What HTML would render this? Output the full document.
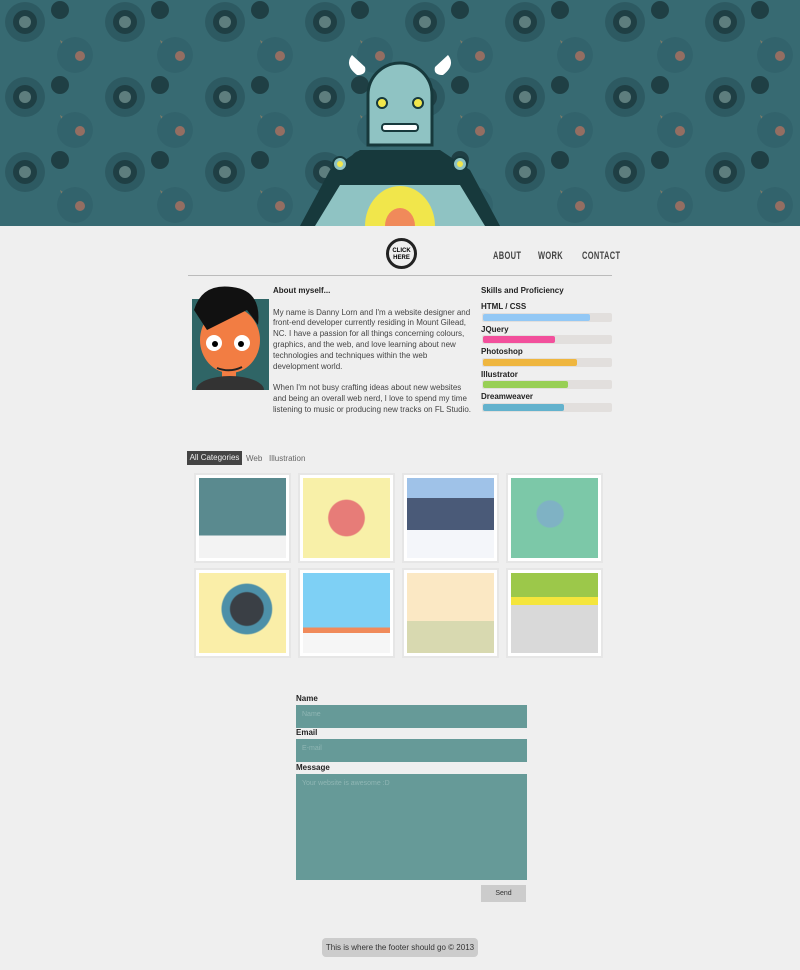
<!DOCTYPE html>
<html><head><style>
body{margin:0;width:800px;height:970px;background:#efefef;font-family:"Liberation Sans",sans-serif;position:relative;overflow:hidden;color:#333}
.a{position:absolute}
.nav{font-family:"Liberation Sans",sans-serif;font-size:11px;font-weight:bold;color:#444;letter-spacing:0.5px;transform:scaleX(0.68);transform-origin:left}
.sk{font-size:8px;font-weight:bold;color:#222}
.bar{height:9px;width:130px;background:#e2dfdd;border-radius:2px}
.bar div{height:7px;margin:1px;border-radius:2px}
.cell{width:93px;height:86px;background:#fff;border:2px solid #e6e6e6;padding:0}
.cell div{margin:3px;height:80px}
label{position:absolute;font-size:8px;font-weight:bold;color:#222}
.in{background:#669a98;font-size:7px;color:#8fb6b4;padding:6px 6px;box-sizing:border-box}
</style></head><body>
<svg class="a" style="left:0px;top:0px" width="800" height="226">
<defs><pattern id="p" width="100" height="75" patternUnits="userSpaceOnUse">
<rect width="100" height="75" fill="#376a72"/>
<path d="M60 40 L90 60 L70 70Z" fill="#7d7a68"/>
<circle cx="25" cy="22" r="20" fill="#2d5a62"/><circle cx="25" cy="22" r="12" fill="#1f3f44"/><circle cx="25" cy="22" r="6" fill="#5e7e7e"/>
<circle cx="75" cy="55" r="18" fill="#32636c"/><circle cx="80" cy="56" r="5" fill="#946e62"/>
<circle cx="60" cy="10" r="9" fill="#1f3f44"/></pattern></defs>
<rect width="800" height="226" fill="url(#p)"/>
<path d="M300 226 L330 170 L360 150 L440 150 L470 170 L500 226Z" fill="#17393c"/>
<path d="M315 226 L340 185 L460 185 L485 226Z" fill="#8fc3c3"/>
<path d="M365 226 A35 40 0 0 1 435 226Z" fill="#f1e64b"/><path d="M385 226 A15 18 0 0 1 415 226Z" fill="#f08a5a"/>
<circle cx="340" cy="164" r="7" fill="#8fc3c3" stroke="#17393c" stroke-width="2"/><circle cx="340" cy="164" r="3" fill="#f1e64b"/>
<circle cx="460" cy="164" r="7" fill="#8fc3c3" stroke="#17393c" stroke-width="2"/><circle cx="460" cy="164" r="3" fill="#f1e64b"/>
<path d="M368 145 L368 95 A32 32 0 0 1 432 95 L432 145Z" fill="#8fc3c3" stroke="#17393c" stroke-width="3"/>
<circle cx="382" cy="103" r="5" fill="#f1e64b" stroke="#17393c" stroke-width="2"/><circle cx="418" cy="103" r="5" fill="#f1e64b" stroke="#17393c" stroke-width="2"/>
<rect x="382" y="124" width="36" height="7" rx="3" fill="#fff" stroke="#17393c" stroke-width="2"/>
<path d="M352 55 q-8 10 5 20 q10 0 8 -8Z M448 55 q8 10 -5 20 q-10 0 -8 -8Z" fill="#fff"/>
</svg>
<svg class="a" style="left:385px;top:237px" width="33" height="33"><circle cx="16.5" cy="16.5" r="14" fill="none" stroke="#222" stroke-width="3"/><text x="16.5" y="15" font-size="6" font-weight="bold" text-anchor="middle" font-family="Liberation Sans">CLICK</text><text x="16.5" y="22" font-size="6" font-weight="bold" text-anchor="middle" font-family="Liberation Sans">HERE</text></svg>
<div class="a nav" style="left:493px;top:250px">ABOUT</div>
<div class="a nav" style="left:538px;top:250px">WORK</div>
<div class="a nav" style="left:582px;top:250px">CONTACT</div>
<div class="a" style="left:188px;top:275px;width:424px;height:1px;background:#bbb"></div>
<svg class="a" style="left:192px;top:285px" width="77" height="105"><rect y="14" width="77" height="91" fill="#2f6566"/><rect x="30" y="75" width="14" height="20" fill="#f27d43"/><ellipse cx="38" cy="105" rx="34" ry="14" fill="#333"/><ellipse cx="38" cy="55" rx="30" ry="33" fill="#f27d43"/><path d="M2 25 Q10 -2 40 2 Q70 5 66 40 L55 25 L15 45Z" fill="#111"/><circle cx="22" cy="58" r="8" fill="#fff"/><circle cx="50" cy="58" r="8" fill="#fff"/><circle cx="23" cy="59" r="3"/><circle cx="49" cy="59" r="3"/><path d="M25 83 Q38 88 50 82" stroke="#222" stroke-width="2" fill="none"/></svg>
<div class="a" style="left:273px;top:286px;width:200px;font-size:8px;line-height:10.8px;color:#444"><b style="color:#222">About myself...</b><br><br>My name is Danny Lorn and I'm a website designer and front-end developer currently residing in Mount Gilead, NC. I have a passion for all things concerning colours, graphics, and the web, and love learning about new technologies and techniques within the web development world.<br><br>When I'm not busy crafting ideas about new websites and being an overall web nerd, I love to spend my time listening to music or producing new tracks on FL Studio.</div>
<div class="a sk" style="left:481px;top:286px">Skills and Proficiency</div>
<div class="a sk" style="left:481px;top:302px">HTML / CSS</div><div class="a bar" style="left:482px;top:313px"><div style="width:107px;background:#93c8f5"></div></div>
<div class="a sk" style="left:481px;top:325px">JQuery</div><div class="a bar" style="left:482px;top:335px"><div style="width:72px;background:#f2509c"></div></div>
<div class="a sk" style="left:481px;top:347px">Photoshop</div><div class="a bar" style="left:482px;top:358px"><div style="width:94px;background:#efb63f"></div></div>
<div class="a sk" style="left:481px;top:370px">Illustrator</div><div class="a bar" style="left:482px;top:380px"><div style="width:85px;background:#98cf55"></div></div>
<div class="a sk" style="left:481px;top:392px">Dreamweaver</div><div class="a bar" style="left:482px;top:403px"><div style="width:81px;background:#63b2cd"></div></div>
<div class="a" style="left:187px;top:451px;width:55px;height:14px;background:#444;color:#eee;font-size:8px;line-height:14px;text-align:center">All Categories</div>
<div class="a" style="left:246px;top:454px;font-size:8px;color:#666">Web&nbsp;&nbsp;&nbsp;Illustration</div>
<div class="a cell" style="left:194px;top:473px"><div style="background:linear-gradient(#5a8a8f 0 72%,#f3f3f3 72%)"></div></div>
<div class="a cell" style="left:298px;top:473px"><div style="background:radial-gradient(circle at 50% 50%,#e77c78 30%,#f8f0a8 32%)"></div></div>
<div class="a cell" style="left:402px;top:473px"><div style="background:linear-gradient(#9fc2e8 0 25%,#4a5a78 25% 65%,#f4f6fa 65%)"></div></div>
<div class="a cell" style="left:506px;top:473px"><div style="background:radial-gradient(circle at 45% 45%,#7fb2c4 20%,#7cc8a8 22%)"></div></div>
<div class="a cell" style="left:194px;top:568px"><div style="background:radial-gradient(circle at 55% 45%,#3a3f45 25%,#4d90a8 27% 38%,#faeea8 40%)"></div></div>
<div class="a cell" style="left:298px;top:568px"><div style="background:linear-gradient(#7ed0f5 0 68%,#f08a5a 68% 75%,#f6f6f6 75%)"></div></div>
<div class="a cell" style="left:402px;top:568px"><div style="background:linear-gradient(#fbe8c4 0 60%,#d8d9b0 60%)"></div></div>
<div class="a cell" style="left:506px;top:568px"><div style="background:linear-gradient(#9cc84a 0 30%,#f4e53c 30% 40%,#d9d9d9 40%)"></div></div>
<label style="left:296px;top:694px">Name</label>
<div class="a in" style="left:296px;top:705px;width:231px;height:23px">Name</div>
<label style="left:296px;top:728px">Email</label>
<div class="a in" style="left:296px;top:739px;width:231px;height:23px">E-mail</div>
<label style="left:296px;top:763px">Message</label>
<div class="a in" style="left:296px;top:774px;width:231px;height:106px">Your website is awesome :D</div>
<div class="a" style="left:481px;top:885px;width:45px;height:17px;background:#ccc;font-size:7px;line-height:17px;text-align:center;color:#333">Send</div>
<div class="a" style="left:322px;top:938px;width:156px;height:19px;background:#ccc;border-radius:4px;font-size:8px;line-height:19px;text-align:center;color:#333">This is where the footer should go © 2013</div>
</body></html>
